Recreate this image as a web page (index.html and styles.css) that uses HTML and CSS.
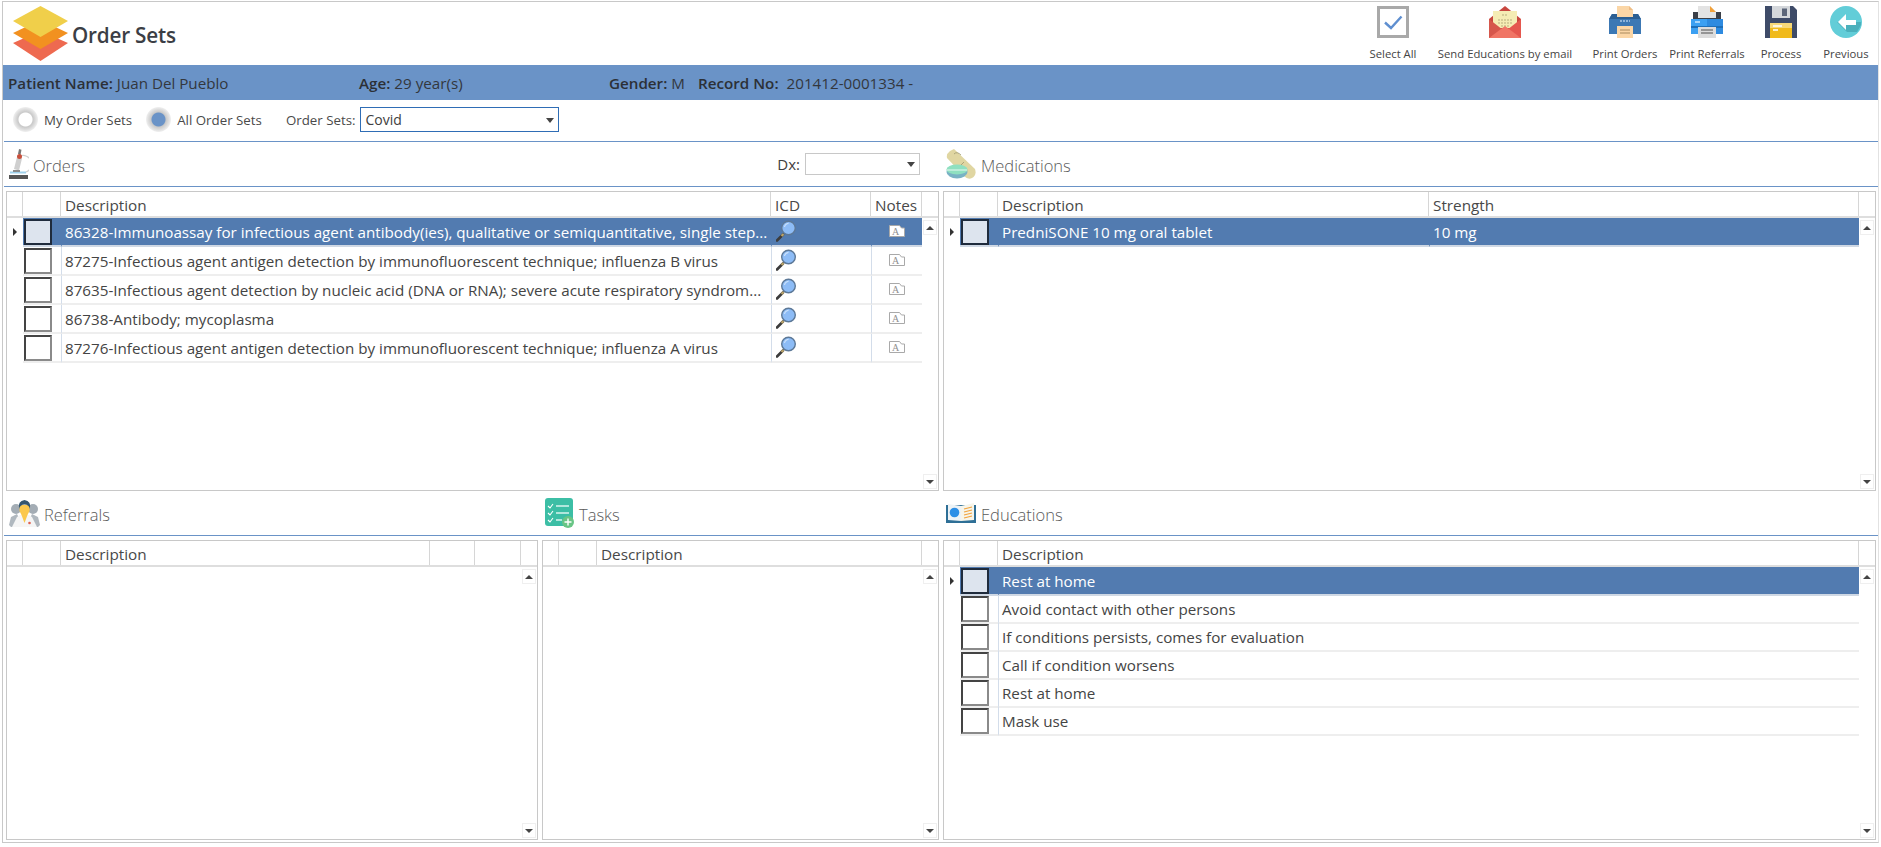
FILE: index.html
```html
<!DOCTYPE html>
<html lang="en">
<head>
<meta charset="utf-8">
<title>Order Sets</title>
<link rel="stylesheet" href="styles.css">
</head>
<body>
<svg class="defs" width="0" height="0" aria-hidden="true">
  <symbol id="i-mag" viewBox="0 0 20 22">
    <path d="M1 20.500 7 14.500" stroke="#3c3c3c" stroke-width="2.600" stroke-linecap="round"/>
    <path d="M5.500 16 7.500 14" stroke="#b9a36a" stroke-width="2.400"/>
    <circle cx="12.500" cy="8" r="6.800" fill="#8dbcf6" stroke="#5c7897" stroke-width="1.400"/>
    <path d="M8.500 7a4.500 4.500 0 0 1 4-3.600" fill="none" stroke="#c9e0fb" stroke-width="1.200"/>
  </symbol>
</svg>

<div class="app">
  <header class="top">
    <svg class="logo" width="55" height="56" viewBox="0 0 55 56" role="img" aria-label="Order Sets logo">
      <path d="M27.500 25 55 37 27.500 55 0 37Z" fill="#ee6a50"/>
      <path d="M27.500 14 55 27 27.500 43 0 27Z" fill="#f29120"/>
      <path d="M27.500 0 55 15 27.500 31 0 15Z" fill="#f0cf4a"/>
    </svg>
    <h1 class="title">Order Sets</h1>
    <nav class="toolbar">
      <div class="tool tool-a">
        <svg class="tool-icon" viewBox="0 0 32 32"><rect x="1.500" y="1.500" width="29" height="29" fill="#fff" stroke="#a9a9a9" stroke-width="3"/><path d="M8 16.500 14 22 24.500 10.500" fill="none" stroke="#5f8fd0" stroke-width="2.400"/></svg>
        <span>Select All</span>
      </div>
      <div class="tool tool-b">
        <svg class="tool-icon" viewBox="0 0 32 32"><path d="M0 13 16 0 32 13V32H0Z" fill="#c8473f"/><path d="M4 5H28V22H4Z" fill="#f5ecb4"/><path d="M13 9h6M9 14h14M9 17h14M12 20h8" stroke="#b7ad7c" stroke-width="1" stroke-dasharray="2 1"/><path d="M0 13 14 24 0 32Z" fill="#d6574c"/><path d="M32 13 18 24 32 32Z" fill="#e5574e"/><path d="M0 32 16 20 32 32Z" fill="#f07565"/></svg>
        <span>Send Educations by email</span>
      </div>
      <div class="tool tool-c">
        <svg class="tool-icon" viewBox="0 0 32 32"><path d="M3 8H29L32 13V28H0V13Z" fill="#3c78b4"/><path d="M3 8H29L32 13H0Z" fill="#2c5f92"/><path d="M8 0H20L24 4V11H8Z" fill="#fbd6a6"/><path d="M20 0 24 4H20Z" fill="#eebd86"/><path d="M11 15H21" stroke="#a9c8e6" stroke-width="1.400" stroke-dasharray="2 1"/><path d="M8 20H24V32H8Z" fill="#fbd6a6"/><path d="M11 24H21M11 27H21" stroke="#a98a5e" stroke-width="1.200"/></svg>
        <span>Print Orders</span>
      </div>
      <div class="tool tool-d">
        <svg class="tool-icon" viewBox="0 0 32 32"><path d="M2 6H30V14H2Z" fill="#3a3f48"/><path d="M7 0H19L25 6V12H7Z" fill="#e3e3e3"/><path d="M19 0 25 6H19Z" fill="#f2a13a"/><path d="M0 13H32V28H0Z" fill="#3ca0f2"/><path d="M16 13H32V28H16Z" fill="#2e8be0"/><path d="M0 20H32V22H0Z" fill="#1e6fb8"/><path d="M4 16H9" stroke="#d6ecfd" stroke-width="1.400"/><path d="M7 21H25V32H7Z" fill="#dcdcdc"/><path d="M10 24H22M10 27H22" stroke="#7e7e7e" stroke-width="1.300"/></svg>
        <span>Print Referrals</span>
      </div>
      <div class="tool tool-e">
        <svg class="tool-icon" viewBox="0 0 32 32"><path d="M0 0H28L32 4V32H0Z" fill="#3e4b68"/><path d="M7 0H25V12H7Z" fill="#d4d7db"/><path d="M17 2.500H22V10H17Z" fill="#5b6579"/><path d="M5 17H27V32H5Z" fill="#f0ba1c"/><path d="M5 17H27V22H5Z" fill="#f7d979"/><path d="M8 20H17M8 24H13" stroke="#fff" stroke-width="1.300"/></svg>
        <span>Process</span>
      </div>
      <div class="tool tool-f">
        <svg class="tool-icon" viewBox="0 0 32 32"><circle cx="16" cy="16" r="16" fill="#62cdd8"/><path d="M7 16 17 26 27 26 31 19V16Z" fill="#4bb0bc"/><path d="M16 8 8 16 16 24V19H26V14H16Z" fill="#fff"/></svg>
        <span>Previous</span>
      </div>
    </nav>
  </header>

  <div class="patient">
    <div class="pf pf-name"><b>Patient Name:</b> Juan Del Pueblo</div>
    <div class="pf pf-age"><b>Age:</b> 29 year(s)</div>
    <div class="pf pf-gender"><b>Gender:</b> M</div>
    <div class="pf pf-rec"><b>Record No:</b><span class="rec-val">201412-0001334 -</span></div>
  </div>

  <div class="filters">
    <span class="radio"></span><span class="flabel f-my">My Order Sets</span>
    <span class="radio radio-on"></span><span class="flabel f-all">All Order Sets</span>
    <span class="flabel">Order Sets:</span>
    <div class="combo combo-main"><span>Covid</span><i class="caret"></i></div>
  </div>

  <div class="head-row">
    <div class="sec sec-orders">
      <svg class="ico" width="20" height="30" viewBox="0 0 20 30"><path d="M1 23.500H17" stroke="#9fd0ea" stroke-width="2"/><path d="M0 26H19V30H0Z" fill="#555"/><path d="M11 7a8.500 8.500 0 0 1 6 16" fill="none" stroke="#d0d0d0" stroke-width="1.300"/><path d="M8 8 13 9.500 10 21.500 5 20Z" fill="#cfcfcf"/><path d="M10 0 12.500 .8 11.500 6 9 5Z" fill="#777"/><circle cx="10.500" cy="7.500" r="2.500" fill="#c8503c"/><path d="M4 22H11" stroke="#8a8a8a" stroke-width="2"/></svg>
      <span class="sec-t">Orders</span>
    </div>
    <div class="sec sec-dx">
      <span class="dx-l">Dx:</span>
      <div class="combo combo-dx"><span></span><i class="caret"></i></div>
    </div>
    <div class="sec sec-meds">
      <svg class="ico" width="30" height="30" viewBox="0 0 30 30"><path d="M4 2 8 0 29 20Q31 26 26 29 22 31 18 27L1 9Q0 5 4 2Z" fill="#e0d6a2"/><path d="M8 5Q11 2 15 6M18 13 13 18" fill="none" stroke="#9c9770" stroke-width=".8"/><ellipse cx="11" cy="23" rx="10.500" ry="6.500" fill="#79b2c4"/><ellipse cx="11" cy="20.500" rx="10.500" ry="5" fill="#8fe0c0"/><path d="M1 21H21" stroke="#fff" stroke-width=".8"/></svg>
      <span class="sec-t sec-t-m">Medications</span>
    </div>
  </div>

  <div class="grid-row">
    <section class="dgrid dg-orders span-2">
      <div class="dhead"><div></div><div></div><div class="hc">Description</div><div class="hc">ICD</div><div class="hc hc-c">Notes</div><div></div></div>
      <div class="dbody">
        <div class="rows">
          <div class="row row-sel"><div class="rh"><i class="arrow"></i></div><div class="ck"><i class="box"></i></div><div class="cd">86328-Immunoassay for infectious agent antibody(ies), qualitative or semiquantitative, single step...</div><div class="cd cd-i"><svg class="mag"><use href="#i-mag"/></svg></div><div class="cd cd-n"><svg class="note" viewBox="0 0 16 12"><path d="M.5.500H10.500L12.500 3H15.500V11.500H.5Z" fill="#fff" stroke="#a9a9a9"/><text x="6.500" y="9.800" class="note-a">A</text></svg></div></div>
          <div class="row"><div class="rh"></div><div class="ck"><i class="box"></i></div><div class="cd">87275-Infectious agent antigen detection by immunofluorescent technique; influenza B virus</div><div class="cd cd-i"><svg class="mag"><use href="#i-mag"/></svg></div><div class="cd cd-n"><svg class="note" viewBox="0 0 16 12"><path d="M.5.500H10.500L12.500 3H15.500V11.500H.5Z" fill="#fff" stroke="#a9a9a9"/><text x="6.500" y="9.800" class="note-a">A</text></svg></div></div>
          <div class="row"><div class="rh"></div><div class="ck"><i class="box"></i></div><div class="cd">87635-Infectious agent detection by nucleic acid (DNA or RNA); severe acute respiratory syndrom...</div><div class="cd cd-i"><svg class="mag"><use href="#i-mag"/></svg></div><div class="cd cd-n"><svg class="note" viewBox="0 0 16 12"><path d="M.5.500H10.500L12.500 3H15.500V11.500H.5Z" fill="#fff" stroke="#a9a9a9"/><text x="6.500" y="9.800" class="note-a">A</text></svg></div></div>
          <div class="row"><div class="rh"></div><div class="ck"><i class="box"></i></div><div class="cd">86738-Antibody; mycoplasma</div><div class="cd cd-i"><svg class="mag"><use href="#i-mag"/></svg></div><div class="cd cd-n"><svg class="note" viewBox="0 0 16 12"><path d="M.5.500H10.500L12.500 3H15.500V11.500H.5Z" fill="#fff" stroke="#a9a9a9"/><text x="6.500" y="9.800" class="note-a">A</text></svg></div></div>
          <div class="row"><div class="rh"></div><div class="ck"><i class="box"></i></div><div class="cd">87276-Infectious agent antigen detection by immunofluorescent technique; influenza A virus</div><div class="cd cd-i"><svg class="mag"><use href="#i-mag"/></svg></div><div class="cd cd-n"><svg class="note" viewBox="0 0 16 12"><path d="M.5.500H10.500L12.500 3H15.500V11.500H.5Z" fill="#fff" stroke="#a9a9a9"/><text x="6.500" y="9.800" class="note-a">A</text></svg></div></div>
        </div>
        <div class="sbar"><span class="sb"><i class="up"></i></span><span class="sb"><i class="down"></i></span></div>
      </div>
    </section>
    <section class="dgrid dg-meds">
      <div class="dhead"><div></div><div></div><div class="hc">Description</div><div class="hc">Strength</div><div></div></div>
      <div class="dbody">
        <div class="rows">
          <div class="row row-sel"><div class="rh"><i class="arrow"></i></div><div class="ck"><i class="box"></i></div><div class="cd">PredniSONE 10 mg oral tablet</div><div class="cd">10 mg</div></div>
        </div>
        <div class="sbar"><span class="sb"><i class="up"></i></span><span class="sb"><i class="down"></i></span></div>
      </div>
    </section>
  </div>

  <div class="head-row head-row-b">
    <div class="sec sec-ref">
      <svg class="ico" width="31" height="27" viewBox="0 0 31 27"><circle cx="7" cy="9" r="5" fill="#a4adb5"/><circle cx="24" cy="9" r="5" fill="#a4adb5"/><path d="M0 25 2 17 8 14 12 22 10 27H2ZM31 25 29 17 23 14 19 22 21 27H29Z" fill="#b0b8bf"/><path d="M3 27 8 17 11 15H20L23 17 28 27Z" fill="#f5f5f5"/><path d="M10.500 5H20.500V11L18.500 15 15.500 23 12.500 15 10.500 11Z" fill="#fbc84c"/><path d="M10 9Q8.500 1 15.500 0 22.500 1 21 9 20 4.500 15.500 4.500 11 4.500 10 9Z" fill="#34566f"/><circle cx="20.500" cy="23" r="1.300" fill="#e0604f"/></svg>
      <span class="sec-t">Referrals</span>
    </div>
    <div class="sec sec-tasks">
      <svg class="ico" width="30" height="30" viewBox="0 0 30 30"><rect x="0" y="0" width="28" height="28" rx="3" fill="#3cbea5"/><path d="M3 8 5 10 8 6M3 15 5 17 8 13M3 22 5 24 8 20" fill="none" stroke="#fff" stroke-width="1.100"/><path d="M11 8H24M11 15H24M11 22H17" stroke="#d7f4ee" stroke-width="1.600"/><circle cx="23" cy="24" r="6" fill="#69c585"/><path d="M23 20.500V27.500M19.500 24H26.500" stroke="#fff" stroke-width="1.400"/></svg>
      <span class="sec-t">Tasks</span>
    </div>
    <div class="sec sec-edu">
      <svg class="ico" width="30" height="20" viewBox="0 0 30 20"><path d="M0 2H30V20H0Z" fill="#2e6f96"/><path d="M2 1 15 3V18L2 17Z" fill="#eef3f6"/><path d="M15 3 28 0V17L15 18Z" fill="#f7f5ea"/><circle cx="8.500" cy="9.500" r="4.800" fill="#2c8fe6"/><path d="M18 6 26 4M18 9 26 7M18 12 26 10M18 15 26 13" stroke="#f2a23c" stroke-width="1.100"/></svg>
      <span class="sec-t sec-t-m">Educations</span>
    </div>
  </div>

  <div class="grid-row">
    <section class="dgrid dg-ref">
      <div class="dhead"><div></div><div></div><div class="hc">Description</div><div class="hc"></div><div class="hc"></div><div></div></div>
      <div class="dbody"><div class="rows"></div><div class="sbar"><span class="sb"><i class="up"></i></span><span class="sb"><i class="down"></i></span></div></div>
    </section>
    <section class="dgrid dg-tasks">
      <div class="dhead"><div></div><div></div><div class="hc">Description</div><div></div></div>
      <div class="dbody"><div class="rows"></div><div class="sbar"><span class="sb"><i class="up"></i></span><span class="sb"><i class="down"></i></span></div></div>
    </section>
    <section class="dgrid dg-edu">
      <div class="dhead"><div></div><div></div><div class="hc">Description</div><div></div></div>
      <div class="dbody">
        <div class="rows">
          <div class="row row-sel"><div class="rh"><i class="arrow"></i></div><div class="ck"><i class="box"></i></div><div class="cd">Rest at home</div></div>
          <div class="row"><div class="rh"></div><div class="ck"><i class="box"></i></div><div class="cd">Avoid contact with other persons</div></div>
          <div class="row"><div class="rh"></div><div class="ck"><i class="box"></i></div><div class="cd">If conditions persists, comes for evaluation</div></div>
          <div class="row"><div class="rh"></div><div class="ck"><i class="box"></i></div><div class="cd">Call if condition worsens</div></div>
          <div class="row"><div class="rh"></div><div class="ck"><i class="box"></i></div><div class="cd">Rest at home</div></div>
          <div class="row"><div class="rh"></div><div class="ck"><i class="box"></i></div><div class="cd">Mask use</div></div>
        </div>
        <div class="sbar"><span class="sb"><i class="up"></i></span><span class="sb"><i class="down"></i></span></div>
      </div>
    </section>
  </div>
</div>
</body>
</html>
```
FILE: styles.css
```css
* { box-sizing: border-box; }
html, body { margin: 0; padding: 0; background: #fff; overflow: hidden; }
body { font-family: "Open Sans", "Noto Sans", sans-serif; font-size: 15px; color: #404040; }
.defs { position: absolute; }

.app { margin: 1px 0 0 2px; width: 1877px; height: 842px; border: 1px solid #c8c8c8; border-right-color: #e2e2e2; }

/* top header */
.top { height: 63px; display: flex; align-items: flex-start; }
.logo { margin: 4px 0 0 10px; flex: none; }
.title { margin: 18px 0 0 4px; font-size: 20.700px; line-height: 30px; font-weight: 600; color: #3b3e45; letter-spacing: -.2px; }
.toolbar { margin-left: auto; display: flex; }
.tool { display: flex; flex-direction: column; align-items: center; padding-top: 4px; font-size: 11.300px; white-space: nowrap; }
.tool span { margin-top: 6px; line-height: 20px; color: #444; }
.tool-icon { width: 32px; height: 32px; display: block; }
.tool-a { width: 66px; } .tool-b { width: 158px; } .tool-c { width: 82px; }
.tool-d { width: 82px; } .tool-e { width: 66px; } .tool-f { width: 64px; }

/* patient strip */
.patient { height: 35px; background: #6a93c7; display: flex; align-items: center; padding-left: 5px; font-size: 15.200px; color: #33373d; }
.pf b { font-weight: 600; color: #2c3036; }
.pf-name { width: 351px; } .pf-age { width: 250px; } .pf-gender { width: 89px; }
.rec-val { margin-left: 8px; }

/* filters */
.filters { height: 42px; margin-left: 1px; border-bottom: 1px solid #6a93c7; display: flex; align-items: center; padding: 0 0 2px 9px; font-size: 13.300px; }
.radio { width: 25px; height: 25px; border-radius: 50%; flex: none; background: radial-gradient(circle, #fff 0 6.500px, #c9c9c9 7.500px, #dcdcdc 10px, #f0f0f0 12.500px); }
.radio-on { background: radial-gradient(circle, #6a93c7 0 6.500px, #c9c9c9 7.500px, #dcdcdc 10px, #f0f0f0 12.500px); }
.flabel { margin-left: 6px; color: #4a4a4a; }
.f-my { margin-right: 14px; } .f-all { margin-right: 18px; }
.combo { position: relative; display: flex; align-items: center; background: #fff; }
.combo-main { width: 199px; height: 25px; margin-left: 5px; border: 1px solid #2f6db5; padding-left: 4px; font-size: 14px; }
.caret { position: absolute; right: 4px; top: 50%; margin-top: -2px; border: 4px solid transparent; border-top: 5px solid #444; border-bottom: 0; width: 0; height: 0; }

/* section headings */
.head-row { height: 45px; margin-left: 1px; border-bottom: 1px solid #6a93c7; display: grid; grid-template-columns: 450px 466px 1fr; }
.head-row-b { grid-template-columns: 536px 401px 1fr; }
.sec { display: flex; align-items: center; }
.ico { flex: none; display: block; }
.sec-t { font-size: 16.500px; font-weight: 300; color: #5a5a5a; margin-left: 4px; padding-top: 2px; }
.sec-t-m { margin-left: 5px; }
.sec-orders { padding-left: 5px; }
.sec-dx { justify-content: flex-end; }
.dx-l { margin-right: 5px; font-size: 15px; }
.combo-dx { width: 115px; height: 22px; border: 1px solid #c8c8c8; }
.sec-meds { padding-left: 26px; }
.sec-ref, .sec-tasks, .sec-edu { padding-left: 5px; }

/* grids */
.grid-row { height: 300px; margin: 4px 0 0 3px; display: grid; grid-template-columns: 532px 397px 933px; column-gap: 4px; }
.span-2 { grid-column: span 2; }
.dgrid { border: 1px solid #c8c8c8; display: flex; flex-direction: column; min-width: 0; }
.dhead { height: 26px; flex: none; display: grid; border-bottom: 2px solid #dedede; }
.dhead > div { border-right: 1px solid #d6d6d6; }
.dhead > div:last-child { border-right: 0; }
.hc { padding-left: 4px; line-height: 27px; font-size: 15.300px; color: #484848; white-space: nowrap; overflow: hidden; }
.hc-c { padding-left: 0; text-align: center; }
.dg-orders .dhead { grid-template-columns: 16px 38px 710px 100px 51px 16px; }
.dg-orders .row { grid-template-columns: 16px 38px 710px 100px 51px; height: 29px; }
.dg-meds .dhead { grid-template-columns: 16px 38px 431px 430px 16px; }
.dg-meds .row { grid-template-columns: 16px 38px 431px 430px; height: 29px; }
.dg-ref .dhead { grid-template-columns: 16px 38px 369px 45px 46px 16px; }
.dg-tasks .dhead { grid-template-columns: 16px 38px 325px 16px; }
.dg-edu .dhead { grid-template-columns: 16px 38px 861px 16px; }
.dg-edu .row { grid-template-columns: 16px 38px 861px; height: 28px; }

.dbody { flex: 1; display: flex; min-height: 0; }
.rows { flex: 1; min-width: 0; }
.row { display: grid; }
.rh { display: flex; align-items: center; justify-content: center; padding-bottom: 2px; }
.arrow { width: 0; height: 0; border: 4px solid transparent; border-left: 4px solid #333; border-right: 0; }
.ck { border-bottom: 2px solid #eee; padding: 1px 0 0 1px; }
.box { display: block; width: 28px; height: 26px; background: #fff; border: 2px solid #8a8a8a; border-top-color: #444; border-left-color: #444; }
.cd { border-bottom: 2px solid #eee; border-left: 1px solid #d3ddea; padding-left: 3px; font-size: 15.200px; line-height: 28px; white-space: nowrap; overflow: hidden; color: #444; }
.cd-i { display: flex; align-items: center; padding: 0 0 2px 4px; }
.cd-n { display: flex; align-items: center; justify-content: center; padding: 0 0 2px; }
.mag { width: 20px; height: 22px; display: block; }
.note { width: 16px; height: 12px; display: block; }
.note-a { font-family: "Liberation Serif", serif; font-size: 10px; fill: #8f8f8f; text-anchor: middle; }

.row-sel .ck, .row-sel .cd { background: #527bb0; color: #fff; border-bottom-color: #cfd8e4; border-left-color: #527bb0; }
.row-sel .box { background: #dde4ee; border-color: #1f2b3c; }

.sbar { width: 16px; flex: none; display: flex; flex-direction: column; justify-content: space-between; padding: 2px 1px 1px; }
.sb { width: 14px; height: 15px; border: 1px solid #efefef; display: flex; align-items: center; justify-content: center; }
.up { width: 0; height: 0; border: 4px solid transparent; border-bottom: 4px solid #444; border-top: 0; }
.down { width: 0; height: 0; border: 4px solid transparent; border-top: 4px solid #444; border-bottom: 0; }
```
